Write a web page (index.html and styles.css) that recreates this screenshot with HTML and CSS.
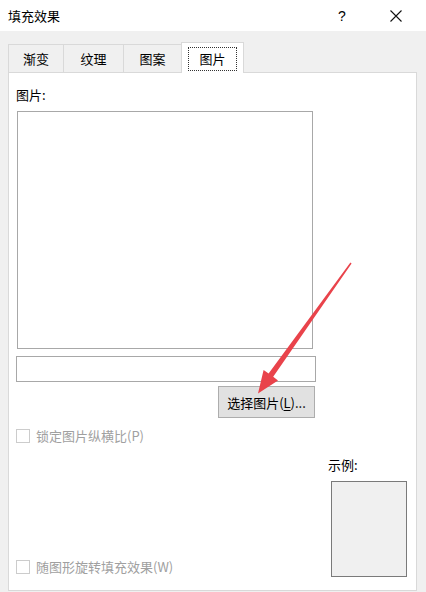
FILE: index.html
```html
<!DOCTYPE html>
<html lang="zh">
<head>
<meta charset="utf-8">
<link rel="stylesheet" href="styles.css">
</head>
<body>
<div class="dialog">
  <div class="titlebar">
    <span class="title">填充效果</span>
    <span class="help">?</span>
    <svg class="close" width="14" height="14" viewBox="0 0 14 14"><path d="M1.5 1.5 L12.5 12.5 M12.5 1.5 L1.5 12.5" stroke="#111" stroke-width="1.1" fill="none"/></svg>
  </div>
  <div class="content">
    <div class="tabs">
      <div class="tab t1">渐变</div>
      <div class="tab t2">纹理</div>
      <div class="tab t3">图案</div>
      <div class="tab active"><span class="focus">图片</span></div>
    </div>
    <div class="panel">
      <div class="label">图片:</div>
      <div class="picbox"></div>
      <div class="textbox"></div>
      <div class="btnrow"><div class="btn">选择图片(<u>L</u>)...</div></div>
      <div class="check c1"><span class="box"></span><span>锁定图片纵横比(P)</span></div>
      <div class="lower">
        <div class="check c2"><span class="box"></span><span>随图形旋转填充效果(W)</span></div>
        <div class="sample">
          <div class="slabel">示例:</div>
          <div class="sbox"></div>
        </div>
      </div>
    </div>
  </div>
  <svg class="arrow" width="426" height="592" viewBox="0 0 426 592">
    <polygon points="351.6,263.4 273.2,376.8 278,380.4 258,393.5 263.6,370 268.6,373.4 350.4,262.6" fill="#e9434b"/>
  </svg>
</div>
</body>
</html>
```

FILE: styles.css
```css
* { box-sizing: border-box; }
html, body { margin: 0; padding: 0; }
body {
  width: 426px;
  height: 592px;
  overflow: hidden;
  font-family: "Noto Sans CJK SC", "Noto Sans", sans-serif;
  font-size: 13px;
  color: #000;
  background: #f0f0f0;
}
.dialog { position: relative; width: 426px; height: 592px; }
.titlebar {
  height: 31px;
  background: #fff;
  display: flex;
  align-items: center;
  padding-left: 8px;
}
.title { font-size: 13px; flex: 1; }
.help { width: 14px; text-align: center; font-family: "Liberation Sans", sans-serif; font-size: 14px; margin-right: 40px; }
.close { margin-right: 23px; }
.content { padding: 11px 9px 0 8px; }
.tabs { display: flex; height: 30px; align-items: flex-end; }
.tab {
  height: 28px;
  border: 1px solid #d9d9d9;
  border-bottom: none;
  border-left: none;
  background: #f0f0f0;
  display: flex;
  align-items: center;
  justify-content: center;
  color: #000;
}
.t1 { width: 56px; border-left: 1px solid #d9d9d9; }
.t2 { width: 60px; }
.t3 { width: 58px; }
.tab.active {
  width: 63px;
  height: 31px;
  background: #fff;
  border-left: 1px solid #d9d9d9;
  margin-left: -1px;
  margin-bottom: -1px;
  position: relative;
  z-index: 1;
}
.focus {
  border: 1px dotted #333;
  width: 49px;
  height: 24px;
  display: flex;
  align-items: center;
  justify-content: center;
  margin-top: 1px;
}
.panel {
  background: #fff;
  border: 1px solid #d9d9d9;
  height: 519px;
  padding: 14px 0 0 7px;
  display: flex;
  flex-direction: column;
}
.label { line-height: 16px; height: 16px; }
.picbox {
  width: 296px;
  height: 238px;
  border: 1px solid #a8a8a8;
  margin: 8px 0 0 1px;
}
.textbox {
  width: 300px;
  height: 26px;
  border: 1px solid #a8a8a8;
  margin-top: 7px;
}
.btnrow { width: 299px; display: flex; justify-content: flex-end; margin-top: 4px; }
.btn {
  width: 97px;
  height: 32px;
  background: #e1e1e1;
  border: 1px solid #adadad;
  display: flex;
  align-items: center;
  justify-content: center;
}
.btn u { text-decoration: underline; text-underline-offset: 2px; }
.check { display: flex; align-items: center; color: #a0a0a0; height: 15px; }
.check .box {
  width: 14px;
  height: 14px;
  border: 1px solid #cccccc;
  background: #fff;
  margin-right: 6px;
}
.c1 { margin-top: 10px; }
.lower {
  display: flex;
  align-items: flex-end;
  flex: 1;
  padding-bottom: 13px;
}
.c2 { width: 312px; margin-bottom: 3px; }
.sample { display: flex; flex-direction: column; }
.slabel { color: #000; line-height: 16px; margin-bottom: 8px; }
.sbox {
  width: 76px;
  height: 96px;
  margin-left: 3px;
  background: #f0f0f0;
  border: 1px solid #7a7a7a;
}
.arrow { position: absolute; left: 0; top: 0; pointer-events: none; }
```
